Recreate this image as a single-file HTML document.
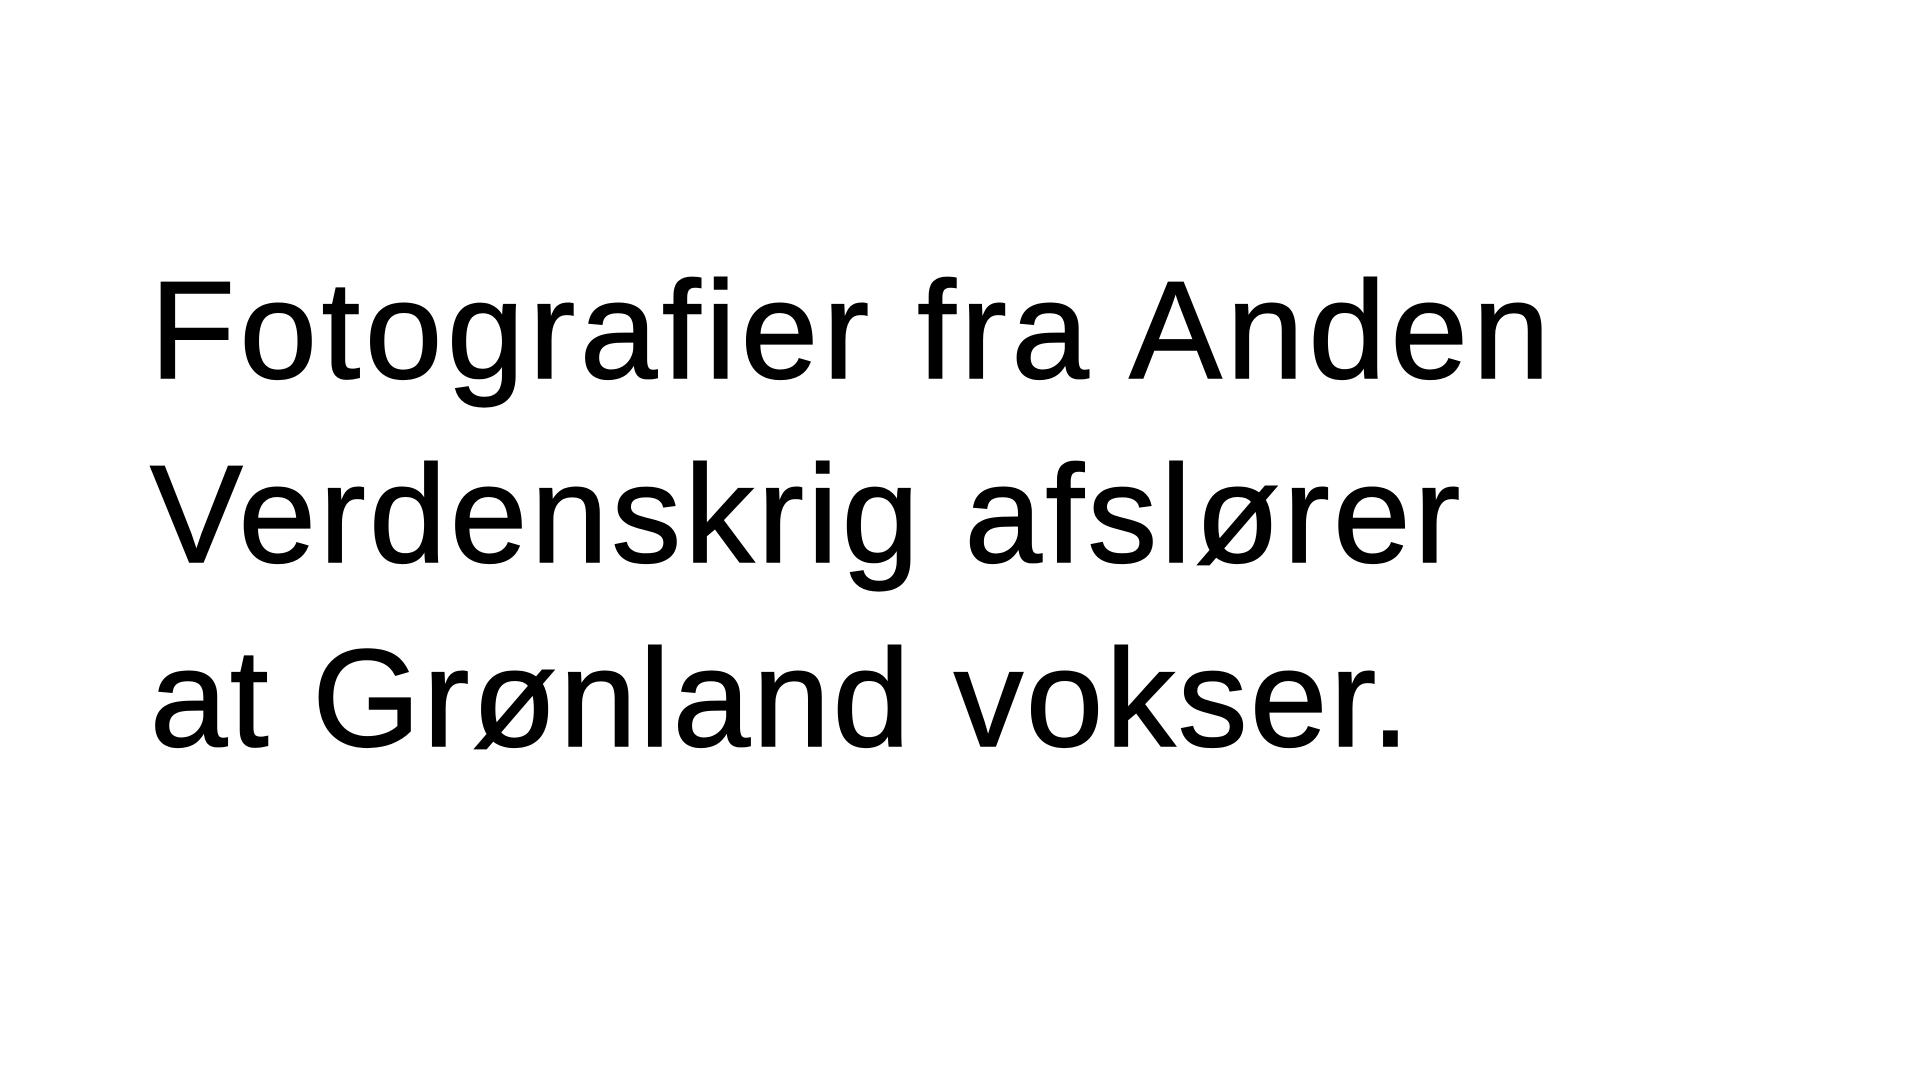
<!DOCTYPE html>
<html><head><meta charset="utf-8"><style>
html,body{margin:0;padding:0;background:#fff;width:1920px;height:1080px;overflow:hidden}
h1{position:absolute;left:150px;top:239px;margin:0;font-family:"Liberation Sans",sans-serif;font-weight:400;font-size:139px;line-height:184px;color:#000;white-space:nowrap;letter-spacing:4px;-webkit-text-stroke:1.5px #000}
.a{letter-spacing:4.7px}.b{letter-spacing:3.5px}.c{letter-spacing:2.6px}
</style></head><body>
<h1><span class="a">Fotografier fra Anden</span><br><span class="b">Verdenskrig afslører</span><br><span class="c">at Grønland vokser.</span></h1>
</body></html>
